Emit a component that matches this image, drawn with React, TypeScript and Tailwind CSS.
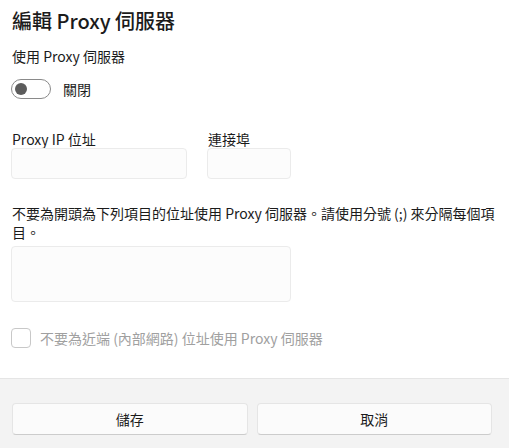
import React from "react";

const font = { fontFamily: '"Noto Sans CJK TC", "Noto Sans", sans-serif' };

export default function App() {
  return (
    <div
      className="w-[509px] h-[448px] bg-white flex flex-col overflow-hidden text-[#1b1b1b]"
      style={font}
    >
      <div className="flex-1 pl-[11px] flex flex-col">
        <div className="mt-[7px] pl-[1px] text-[20px] leading-[28px] font-medium">
          編輯 Proxy 伺服器
        </div>
        <div className="mt-[11px] pl-[1px] text-[14px] leading-[20px]">
          使用 Proxy 伺服器
        </div>
        <div className="mt-[13px] flex items-center h-[20px]">
          <div className="w-[40px] h-[20px] rounded-full border border-[#8a8a8a] flex items-center pl-[3px]">
            <div className="w-[12px] h-[12px] rounded-full bg-[#5c5c5c]" />
          </div>
          <span className="ml-[12px] text-[14px] leading-[20px]">關閉</span>
        </div>
        <div className="mt-[31px] flex gap-[20px]">
          <div className="flex flex-col w-[176px]">
            <div className="pl-[1px] text-[14px] leading-[18px]">Proxy IP 位址</div>
            <div className="mt-0 h-[31px] rounded-[4px] border border-[#ebebeb] bg-[#fcfcfc]" />
          </div>
          <div className="flex flex-col w-[84px]">
            <div className="pl-[1px] text-[14px] leading-[18px]">連接埠</div>
            <div className="mt-0 h-[31px] rounded-[4px] border border-[#ebebeb] bg-[#fcfcfc]" />
          </div>
        </div>
        <div className="mt-[25px] pl-[1px] pr-[12px] text-[14px] leading-[19px]">
          不要為開頭為下列項目的位址使用 Proxy 伺服器。請使用分號 (;) 來分隔每個項目。
        </div>
        <div className="mt-[4px] w-[280px] h-[56px] rounded-[4px] border border-[#ebebeb] bg-[#fcfcfc]" />
        <div className="mt-[26px] flex items-center h-[20px]">
          <div className="w-[20px] h-[20px] rounded-[4px] border border-[#c8c8c8] bg-white" />
          <span className="ml-[9px] text-[14px] leading-[20px] text-[#a0a0a0]">
            不要為近端 (內部網路) 位址使用 Proxy 伺服器
          </span>
        </div>
      </div>
      <div className="h-[70px] shrink-0 bg-[#f3f3f3] border-t border-[#e5e5e5] pl-[12px] pr-[17px] pt-[24px]">
        <div className="grid grid-cols-2 gap-[9px]">
          <button className="h-[32px] rounded-[4px] bg-[#fbfbfb] border border-[#e5e5e5] border-b-[#cccccc] text-[14px] text-[#1b1b1b]">
            儲存
          </button>
          <button className="h-[32px] rounded-[4px] bg-[#fbfbfb] border border-[#e5e5e5] border-b-[#cccccc] text-[14px] text-[#1b1b1b]">
            取消
          </button>
        </div>
      </div>
    </div>
  );
}
